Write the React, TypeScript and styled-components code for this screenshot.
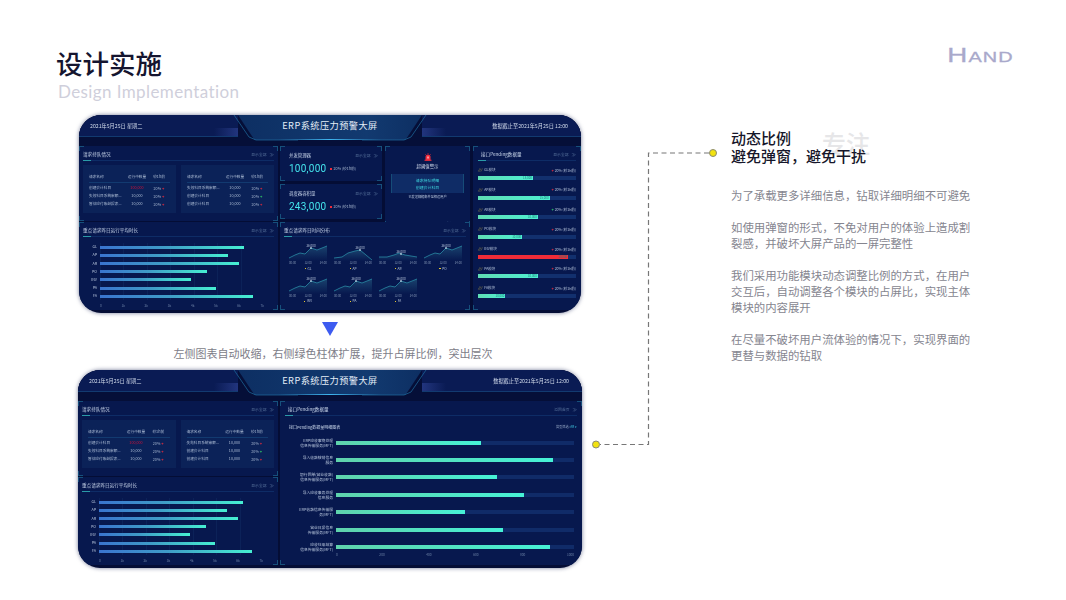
import React from "react";
import styled, { createGlobalStyle, css } from "styled-components";

const GlobalStyle = createGlobalStyle`
  html, body {
    margin: 0;
    padding: 0;
    background: #fff;
    font-family: "Noto Sans CJK SC", "Noto Sans", sans-serif;
  }
`;

const Slide = styled.div`
  position: relative;
  width: 1066px;
  height: 600px;
  overflow: hidden;
  background: #fff;
`;

const TopBar = styled.header`
  display: flex;
  justify-content: space-between;
  align-items: flex-start;
  height: 115px;
  box-sizing: border-box;
  padding: 44px 52px 0 56px;
`;

const PageTitle = styled.h1`
  margin: 0;
  font-size: 26.5px;
  line-height: 38px;
  font-weight: 500;
  color: #15152f;
`;

const PageSubtitle = styled.div`
  margin: 0 0 0 2px;
  font-family: Lato, sans-serif;
  font-size: 17px;
  line-height: 20px;
  font-weight: 400;
  letter-spacing: 0.4px;
  color: #cfcfdb;
`;

const Brand = styled.div`
  margin-top: 0;
  font-family: "Liberation Sans", sans-serif;
  font-size: 19.5px;
  line-height: 22px;
  font-weight: 400;
  font-variant: small-caps;
  letter-spacing: 0.8px;
  -webkit-text-stroke: 0.3px #a9a9cb;
  transform: scaleX(1.42);
  transform-origin: right center;
  color: #a9a9cb;
`;

const Content = styled.main`
  display: flex;
  align-items: flex-start;
`;

const LeftColumn = styled.section`
  display: flex;
  flex-direction: column;
  align-items: center;
  width: 504px;
  margin-left: 78px;
`;

const DownArrow = styled.div`
  width: 0;
  height: 0;
  margin-top: 9px;
  border-left: 8px solid transparent;
  border-right: 8px solid transparent;
  border-top: 14px solid #3d5bf0;
`;

const Caption = styled.div`
  margin: 8px 0 8px 6px;
  font-size: 11px;
  line-height: 18px;
  color: #7d7d88;
  white-space: nowrap;
`;

const RightColumn = styled.aside`
  position: relative;
  width: 241px;
  margin: 14px 0 0 149px;
`;

const GhostWord = styled.div`
  position: absolute;
  left: 91px;
  top: 0;
  font-size: 24px;
  line-height: 28px;
  font-weight: 500;
  color: #e6e6e8;
`;

const Heading = styled.h2`
  position: relative;
  margin: 0 0 22px;
  font-size: 15px;
  line-height: 18px;
  font-weight: 500;
  color: #16162a;
`;

const Paragraph = styled.p`
  margin: 0 0 16px;
  font-size: 11.4px;
  line-height: 16px;
  color: #85858f;
`;

const Connector = styled.svg`
  position: absolute;
  left: 0;
  top: 0;
  pointer-events: none;
`;

/* dashboard screenshot */

const Screen = styled.div<{ $wide?: boolean }>`
  width: ${(p) => (p.$wide ? 504 : 502)}px;
  height: 198px;
  flex: none;
  overflow: hidden;
  border-radius: 22px;
  background: #040d35;
  box-shadow: 0 0 4px 0 rgba(20, 30, 80, 0.6);
  filter: blur(0.45px);
  color: #c6d3e8;
  line-height: 1;
`;

const ScreenHeader = styled.div`
  display: grid;
  grid-template-columns: 1fr 184px 1fr;
  height: 31px;
  background: #050f38;
`;

const HeaderSide = styled.div<{ $right?: boolean }>`
  display: flex;
  align-items: flex-start;
  height: 22px;
  box-sizing: border-box;
  padding: ${(p) => (p.$right ? "8px 13px 0 0" : "8px 0 0 11px")};
  justify-content: ${(p) => (p.$right ? "flex-end" : "flex-start")};
  border-bottom: 1px solid #123a70;
  background:
    linear-gradient(${(p) => (p.$right ? "270deg" : "90deg")}, transparent, #22357e)
      ${(p) => (p.$right ? "left" : "right")} bottom / 24px 8px no-repeat,
    #0a1b54;
  font-size: 5.2px;
  color: #d3dcec;
  white-space: nowrap;
`;

const TitleHolder = styled.div`
  position: relative;
`;

const TitleEdge = styled.svg`
  position: absolute;
  left: 0;
  top: 0;
  overflow: visible;
`;

const TitlePlate = styled.div`
  display: flex;
  justify-content: center;
  height: 25px;
  padding-top: 6px;
  box-sizing: border-box;
  clip-path: polygon(0 0, 100% 0, 91% 100%, 9% 100%);
  background:
    linear-gradient(90deg, transparent 22%, #3fb6f0 50%, transparent 78%) bottom / 100% 1px no-repeat,
    linear-gradient(90deg, #0d2f63, #123a70 70%, #0d2f63);
  font-size: 9.2px;
  letter-spacing: 0.45px;
  color: #e4edf7;
  white-space: nowrap;
`;

const ScreenBody = styled.div<{ $wide?: boolean }>`
  display: grid;
  grid-template-columns: ${(p) => (p.$wide ? 200 : 199)}px 1fr;
  gap: 2px;
  height: 164px;
`;

const cornerMarks = css`
  background-image:
    linear-gradient(#16507c, #16507c), linear-gradient(#16507c, #16507c),
    linear-gradient(#16507c, #16507c), linear-gradient(#16507c, #16507c),
    linear-gradient(#16507c, #16507c), linear-gradient(#16507c, #16507c),
    linear-gradient(#16507c, #16507c), linear-gradient(#16507c, #16507c);
  background-size: 5px 1px, 1px 5px, 5px 1px, 1px 5px, 5px 1px, 1px 5px, 5px 1px, 1px 5px;
  background-position: 0 0, 0 0, 100% 0, 100% 0, 0 100%, 0 100%, 100% 100%, 100% 100%;
  background-repeat: no-repeat;
`;

const Panel = styled.div`
  ${cornerMarks}
  display: flex;
  flex-direction: column;
  min-width: 0;
  box-sizing: border-box;
  padding: 0 4px;
  background-color: #07184e;
`;

const LeftStack = styled.div`
  display: grid;
  grid-template-rows: 75px 88px;
  gap: 1px;
`;

const PanelHead = styled.div<{ $plain?: boolean }>`
  position: relative;
  display: flex;
  align-items: center;
  justify-content: space-between;
  flex: none;
  height: ${(p) => (p.$plain ? 18 : 15)}px;
  box-sizing: border-box;
  padding-top: ${(p) => (p.$plain ? 0 : 3)}px;
  border-bottom: ${(p) => (p.$plain ? "none" : "1px solid #0e2c66")};
  font-size: 4.6px;
  white-space: nowrap;
  &::after {
    content: "";
    display: ${(p) => (p.$plain ? "none" : "block")};
    position: absolute;
    left: 0;
    bottom: -1px;
    width: 8px;
    height: 1px;
    background: #2a9aa8;
  }
`;

const ShowAll = styled.span`
  font-size: 3.8px;
  color: #56709a;
  &::after {
    content: " ≫";
    font-size: 4.5px;
    margin-left: 2px;
  }
`;

const TableRow = styled.div`
  display: flex;
  gap: 5px;
  margin-top: 4px;
`;

const MiniTable = styled.div`
  flex: 1;
  height: 48px;
  box-sizing: border-box;
  padding: 8px 6px 0;
  background: #0b2258;
`;

const MiniRow = styled.div<{ $head?: boolean }>`
  display: grid;
  grid-template-columns: 37px 22px 1fr;
  align-items: center;
  height: 8px;
  margin-bottom: ${(p) => (p.$head ? 1 : 0)}px;
  padding-bottom: ${(p) => (p.$head ? 1 : 0)}px;
  border-bottom: ${(p) => (p.$head ? "1px solid #123a70" : "none")};
  font-size: 3.7px;
  color: #a9b9d2;
  white-space: nowrap;
`;

const MiniCell = styled.span<{ $alert?: boolean }>`
  text-align: center;
  color: ${(p) => (p.$alert ? "#c8143c" : "inherit")};
`;

const TrendMark = styled.b<{ $up?: boolean }>`
  color: ${(p) => (p.$up ? "#34d46a" : "#f02c3c")};
  font-size: 4px;
  margin-left: 1px;
`;

const HBarChart = styled.div`
  display: grid;
  grid-template-columns: 17px 164px;
  grid-auto-rows: 8.2px;
  margin-top: 6px;
  align-items: center;
`;

const BarLabel = styled.span`
  padding-right: 3px;
  text-align: right;
  font-size: 3.7px;
  color: #b5c3da;
`;

const GridTrack = styled.div`
  height: 8.2px;
  display: flex;
  align-items: center;
  background: repeating-linear-gradient(90deg, #0c2258 0, #0c2258 1px, transparent 1px, transparent 23.43px);
`;

const GradientBar = styled.div`
  height: 3px;
  background: linear-gradient(90deg, #3a74cf, #3f9cc8 45%, #46efd2);
`;

const AxisRow = styled.div`
  display: flex;
  justify-content: space-between;
  font-size: 3.2px;
  color: #6d82a6;
  margin-top: 2px;
`;

const Middle = styled.div`
  display: grid;
  grid-template-columns: 190px 1fr;
  gap: 3px;
`;

const MiddleStack = styled.div`
  display: grid;
  grid-template-rows: 73px 88px;
  gap: 3px;
`;

const CardRow = styled.div`
  display: grid;
  grid-template-columns: 102px 85px;
  gap: 3px;
`;

const CardStack = styled.div`
  display: grid;
  grid-template-rows: 35px 35px;
  gap: 3px;
`;

const MetricCard = styled(Panel)`
  padding: 0 4px 0 9px;
`;

const MetricHead = styled(PanelHead)`
  font-size: 4.4px;
`;

const MetricValue = styled.div`
  display: flex;
  align-items: center;
  gap: 4px;
  font-family: Roboto, sans-serif;
  font-size: 10px;
  letter-spacing: 0.25px;
  color: #45e6ee;
  white-space: nowrap;
`;

const Delta = styled.span`
  font-family: "Noto Sans CJK SC", sans-serif;
  font-size: 3.7px;
  letter-spacing: 0;
  color: #a9b9d2;
  &::before {
    content: "";
    display: inline-block;
    width: 1.6px;
    height: 1.6px;
    margin-right: 1.5px;
    vertical-align: 0.5px;
    background: #f02c3c;
  }
`;

const AlertCard = styled(Panel)`
  align-items: center;
  padding: 7px 6px 0;
`;

const AlertTitle = styled.div`
  margin-top: 3px;
  font-size: 4.4px;
  color: #d3dcec;
`;

const AlertBox = styled.div`
  width: 73px;
  height: 19px;
  margin-top: 6px;
  padding-top: 3px;
  box-sizing: border-box;
  text-align: center;
  background: #0f2c66;
  border-left: 1px solid #164c78;
  border-right: 1px solid #164c78;
  font-size: 3.9px;
  line-height: 6.5px;
  color: #3fd9e0;
`;

const AlertNote = styled.div`
  margin-top: 2px;
  font-size: 3.2px;
  color: #b5c3da;
  white-space: nowrap;
`;

const AlertFooter = styled.div`
  align-self: flex-end;
  margin-top: 11px;
  padding-right: 3px;
`;

const SparkGrid = styled.div`
  display: grid;
  grid-template-columns: repeat(4, 38px);
  column-gap: 7px;
  grid-auto-rows: 32.5px;
  padding: 5px 0 0 5px;
`;

const SparkCell = styled.div`
  display: flex;
  flex-direction: column;
  align-items: center;
`;

const SparkAxis = styled.div`
  display: flex;
  justify-content: space-between;
  width: 100%;
  font-size: 2.9px;
  color: #7d90b0;
`;

const SparkLegend = styled.div`
  margin-top: 2px;
  font-size: 3.2px;
  color: #b5c3da;
  &::before {
    content: "";
    display: inline-block;
    width: 1.4px;
    height: 1.4px;
    margin-right: 1.5px;
    vertical-align: 0.5px;
    background: #e8c832;
  }
`;

const PendingRow = styled.div`
  margin-top: 6px;
  height: 13.7px;
  &:first-of-type {
    margin-top: 7px;
  }
`;

const PendingInfo = styled.div`
  display: flex;
  align-items: center;
  justify-content: space-between;
  height: 6px;
  font-size: 3.5px;
  color: #b5c3da;
  white-space: nowrap;
`;

const PendingName = styled.span`
  &::before {
    content: "///";
    margin-right: 2px;
    font-style: italic;
    color: #c8b040;
  }
`;

const PendingTrack = styled.div`
  height: 4px;
  margin-top: 3px;
  background: #12306e;
`;

const PendingFill = styled.div<{ $red?: boolean }>`
  height: 100%;
  box-sizing: border-box;
  padding-right: 1px;
  text-align: right;
  font-size: 2.9px;
  line-height: 4px;
  color: #1a7a78;
  background: ${(p) => (p.$red ? "#f02c38" : "linear-gradient(90deg, #5fdcb4, #4ef0d2)")};
`;

const PendingPanel = styled(Panel)`
  padding: 0 5px;
`;

const PendingTitle = styled.span`
  padding-left: 3px;
`;

const DetailBar = styled.div`
  display: flex;
  align-items: center;
  justify-content: space-between;
  margin: 9px 0 0 4px;
  font-size: 4px;
  color: #c6d3e8;
  white-space: nowrap;
`;

const Filter = styled.span`
  font-size: 3.2px;
  color: #8ea0bf;
  & > b {
    font-weight: 400;
    color: #3fc9e0;
  }
`;

const DetailChart = styled.div`
  display: grid;
  grid-template-columns: 51px 238px;
  grid-auto-rows: 17.4px;
  align-items: center;
  margin-top: 5px;
`;

const DetailLabel = styled.span`
  padding-right: 3px;
  text-align: right;
  font-size: 3.8px;
  line-height: 5px;
  color: #b5c3da;
  white-space: nowrap;
`;

const DetailTrack = styled.div`
  height: 4px;
  background: #102b68;
`;

const DetailFill = styled.div`
  height: 100%;
  background: linear-gradient(90deg, #5fd2ac, #46f2d6);
`;

const DetailAxis = styled(AxisRow)`
  margin: -3px 0 0 51px;
  width: 238px;
`;

const tableRowsA = [
  ["创建会计科目", "100,000", "20%", false, true],
  ["失效科目系统审额...", "10,000", "20%", false, false],
  ["暂估应付账龄报表...", "10,000", "20%", false, false],
] as const;

const tableRowsB = [
  ["失效科目系统审额...", "10,000", "20%", false, false],
  ["创建会计科目", "10,000", "20%", true, false],
  ["创建会计科目", "10,000", "20%", false, false],
] as const;

const durationBars = [
  ["GL", 87.5],
  ["AP", 78],
  ["AR", 85],
  ["PO", 65],
  ["INV", 55.5],
  ["PA", 71],
  ["FA", 93],
] as const;

const pendingRows = [
  { name: "GL模块", value: "15,000", pct: 56 },
  { name: "AP模块", value: "15,000", pct: 73 },
  { name: "AR模块", value: "10,000", pct: 61, up: true },
  { name: "PO模块", value: "10,000", pct: 45 },
  { name: "INV模块", value: "10,000", pct: 92, red: true },
  { name: "PA模块", value: "10,000", pct: 61 },
  { name: "FA模块", value: "10,000", pct: 28 },
];

const sparkShape = "0,13 6,10 11,8 16,9 22,3 28,5 38,1";
const sparkCells = [
  { name: "GL", points: sparkShape, peak: [22, 3] },
  { name: "AP", points: "0,13 8,12 14,8 21,6 26,5 32,10 38,15", peak: [26, 5] },
  { name: "AR", points: "0,12 8,12 15,10 20,8 26,10 32,11 38,12", peak: [22, 9] },
  { name: "PO", points: sparkShape, peak: [22, 3] },
  { name: "INV", points: sparkShape, peak: [22, 3] },
  { name: "PA", points: sparkShape, peak: [22, 3] },
  { name: "FA", points: sparkShape, peak: [22, 3] },
];

const detailRows = [
  ["ERP应收事物处理", "信息传输服务(MFT)", 61],
  ["导入收款核销信息", "服务", 91],
  ["银行回单(营业收款)", "信息传输服务(MFT)", 67.5],
  ["导入应收事务处理", "信息服务", 79],
  ["ERP收款信息传输服", "务(MFT)", 54],
  ["营业日报信息", "传输服务(MFT)", 70],
  ["应收往来结算", "信息传输服务(MFT)", 90],
] as const;

const Sparkline = ({ id, points, peak }: { id: string; points: string; peak: readonly number[] }) => (
  <svg width="38" height="20" viewBox="0 -3 38 20">
    <defs>
      <linearGradient id={id} x1="0" y1="0" x2="0" y2="1">
        <stop offset="0" stopColor="#3a8ea8" stopOpacity="0.35" />
        <stop offset="1" stopColor="#3a8ea8" stopOpacity="0" />
      </linearGradient>
    </defs>
    <polygon points={`0,16 ${points} 38,16`} fill={`url(#${id})`} />
    <polyline points={points} fill="none" stroke="#2a8aa4" strokeWidth="0.8" />
    <rect x={peak[0] - 0.7} y={peak[1] - 0.7} width="1.4" height="1.4" fill="#e8f4ff" />
    <text x={peak[0]} y={peak[1] - 1.5} fontSize="3" textAnchor="middle" fill="#b5c3da">
      26,000
    </text>
  </svg>
);

const Siren = () => (
  <svg width="8" height="8" viewBox="0 0 16 16">
    <path d="M3 15V8a5 5 0 0 1 10 0v7z" fill="#f02c3c" />
    <rect x="1" y="13.5" width="14" height="2" fill="#f02c3c" />
    <path d="M8 0v2M2 2l1.5 1.5M14 2l-1.5 1.5" stroke="#f02c3c" strokeWidth="1.2" />
    <rect x="7" y="7" width="2" height="4" fill="#fff" />
  </svg>
);

const ScreenTop = () => (
  <ScreenHeader>
    <HeaderSide>2021年5月25日 星期二</HeaderSide>
    <TitleHolder>
      <TitlePlate>ERP系统压力预警大屏</TitlePlate>
      <TitleEdge width="184" height="26" viewBox="0 0 184 26">
        <path d="M-4 0L11 22L18 25H60M124 25H166L173 22L188 0" fill="none" stroke="#1f6ea0" strokeWidth="0.7" />
      </TitleEdge>
    </TitleHolder>
    <HeaderSide $right>数据截止至2021年5月25日 12:00</HeaderSide>
  </ScreenHeader>
);

const QueueTable = ({ rows }: { rows: typeof tableRowsA | typeof tableRowsB }) => (
  <MiniTable>
    <MiniRow $head>
      <span>请求名称</span>
      <MiniCell>运行中数量</MiniCell>
      <MiniCell>较1h前</MiniCell>
    </MiniRow>
    {rows.map((row, i) => (
      <MiniRow key={i}>
        <span>{row[0]}</span>
        <MiniCell $alert={row[4]}>{row[1]}</MiniCell>
        <MiniCell>
          {row[2]}
          <TrendMark $up={row[3]}>+</TrendMark>
        </MiniCell>
      </MiniRow>
    ))}
  </MiniTable>
);

const LeftPanels = () => (
  <LeftStack>
    <Panel>
      <PanelHead>
        <span>请求持队情况</span>
        <ShowAll>显示全部</ShowAll>
      </PanelHead>
      <TableRow>
        <QueueTable rows={tableRowsA} />
        <QueueTable rows={tableRowsB} />
      </TableRow>
    </Panel>
    <Panel>
      <PanelHead>
        <span>重点请求昨日运行平均时长</span>
        <ShowAll>显示全部</ShowAll>
      </PanelHead>
      <HBarChart>
        {durationBars.map(([name, pct]) => (
          <React.Fragment key={name}>
            <BarLabel>{name}</BarLabel>
            <GridTrack>
              <GradientBar style={{ width: `${pct}%` }} />
            </GridTrack>
          </React.Fragment>
        ))}
        <span />
        <AxisRow>
          {["0", "1k", "2k", "3k", "4k", "5k", "6k", "7k"].map((t) => (
            <span key={t}>{t}</span>
          ))}
        </AxisRow>
      </HBarChart>
    </Panel>
  </LeftStack>
);

const Metric = ({ title, value }: { title: string; value: string }) => (
  <MetricCard>
    <MetricHead $plain>
      <span>{title}</span>
      <ShowAll>显示全部</ShowAll>
    </MetricHead>
    <MetricValue>
      {value}
      <Delta>20% (较1h前)</Delta>
    </MetricValue>
  </MetricCard>
);

const OverviewScreen = () => (
  <Screen>
    <ScreenTop />
    <ScreenBody>
      <LeftPanels />
      <Middle>
        <MiddleStack>
          <CardRow>
            <CardStack>
              <Metric title="并发管理器" value="100,000" />
              <Metric title="调度器容积量" value="243,000" />
            </CardStack>
            <AlertCard>
              <Siren />
              <AlertTitle>超阈值警示</AlertTitle>
              <AlertBox>
                请求持队明细
                <br />
                创建会计科目
              </AlertBox>
              <AlertNote>已发送邮箱邮件至相运用户</AlertNote>
              <AlertFooter>
                <ShowAll>显示全部</ShowAll>
              </AlertFooter>
            </AlertCard>
          </CardRow>
          <Panel>
            <PanelHead>
              <span>重点请求昨日时间分布</span>
              <ShowAll>显示全部</ShowAll>
            </PanelHead>
            <SparkGrid>
              {sparkCells.map((cell) => (
                <SparkCell key={cell.name}>
                  <Sparkline id={`spark-${cell.name}`} points={cell.points} peak={cell.peak} />
                  <SparkAxis>
                    <span>00:00</span>
                    <span>12:00</span>
                    <span>24:00</span>
                  </SparkAxis>
                  <SparkLegend>{cell.name}</SparkLegend>
                </SparkCell>
              ))}
            </SparkGrid>
          </Panel>
        </MiddleStack>
        <PendingPanel>
          <PanelHead>
            <PendingTitle>接口Pending数据量</PendingTitle>
            <ShowAll>显示全部</ShowAll>
          </PanelHead>
          {pendingRows.map((row) => (
            <PendingRow key={row.name}>
              <PendingInfo>
                <PendingName>{row.name}</PendingName>
                <span>
                  <TrendMark $up={row.up}>+</TrendMark> 20% (较1h前)
                </span>
              </PendingInfo>
              <PendingTrack>
                <PendingFill $red={row.red} style={{ width: `${row.pct}%` }}>
                  {row.value}
                </PendingFill>
              </PendingTrack>
            </PendingRow>
          ))}
        </PendingPanel>
      </Middle>
    </ScreenBody>
  </Screen>
);

const DetailScreen = () => (
  <Screen $wide>
    <ScreenTop />
    <ScreenBody $wide>
      <LeftPanels />
      <PendingPanel>
        <PanelHead>
          <PendingTitle>接口Pending数据量</PendingTitle>
          <ShowAll>返回首页</ShowAll>
        </PanelHead>
        <DetailBar>
          <span>接口Pending数据量明细图表</span>
          <Filter>
            类型筛选: <b>AR ▾</b>
          </Filter>
        </DetailBar>
        <DetailChart>
          {detailRows.map(([a, b, pct]) => (
            <React.Fragment key={a}>
              <DetailLabel>
                {a}
                <br />
                {b}
              </DetailLabel>
              <DetailTrack>
                <DetailFill style={{ width: `${pct}%` }} />
              </DetailTrack>
            </React.Fragment>
          ))}
        </DetailChart>
        <DetailAxis>
          {["0", "200", "400", "600", "800", "1000"].map((t) => (
            <span key={t}>{t}</span>
          ))}
        </DetailAxis>
      </PendingPanel>
    </ScreenBody>
  </Screen>
);

const App = () => (
  <Slide>
    <GlobalStyle />
    <TopBar>
      <div>
        <PageTitle>设计实施</PageTitle>
        <PageSubtitle>Design Implementation</PageSubtitle>
      </div>
      <Brand>Hand</Brand>
    </TopBar>
    <Content>
      <LeftColumn>
        <OverviewScreen />
        <DownArrow />
        <Caption>左侧图表自动收缩，右侧绿色柱体扩展，提升占屏比例，突出层次</Caption>
        <DetailScreen />
      </LeftColumn>
      <RightColumn>
        <GhostWord>专注</GhostWord>
        <Heading>
          动态比例
          <br />
          避免弹窗，避免干扰
        </Heading>
        <Paragraph>为了承载更多详细信息，钻取详细明细不可避免</Paragraph>
        <Paragraph>如使用弹窗的形式，不免对用户的体验上造成割裂感，并破坏大屏产品的一屏完整性</Paragraph>
        <Paragraph>我们采用功能模块动态调整比例的方式，在用户交互后，自动调整各个模块的占屏比，实现主体模块的内容展开</Paragraph>
        <Paragraph>在尽量不破坏用户流体验的情况下，实现界面的更替与数据的钻取</Paragraph>
      </RightColumn>
    </Content>
    <Connector width="1066" height="600">
      <path d="M709 153H648.500V444.500H600" fill="none" stroke="#777" strokeWidth="1.2" strokeDasharray="5 3.500" />
      <circle cx="713" cy="153" r="3.500" fill="#f2e20f" stroke="#8a8a70" />
      <circle cx="596" cy="444.500" r="3.500" fill="#f2e20f" stroke="#8a8a70" />
    </Connector>
  </Slide>
);

export default App;
